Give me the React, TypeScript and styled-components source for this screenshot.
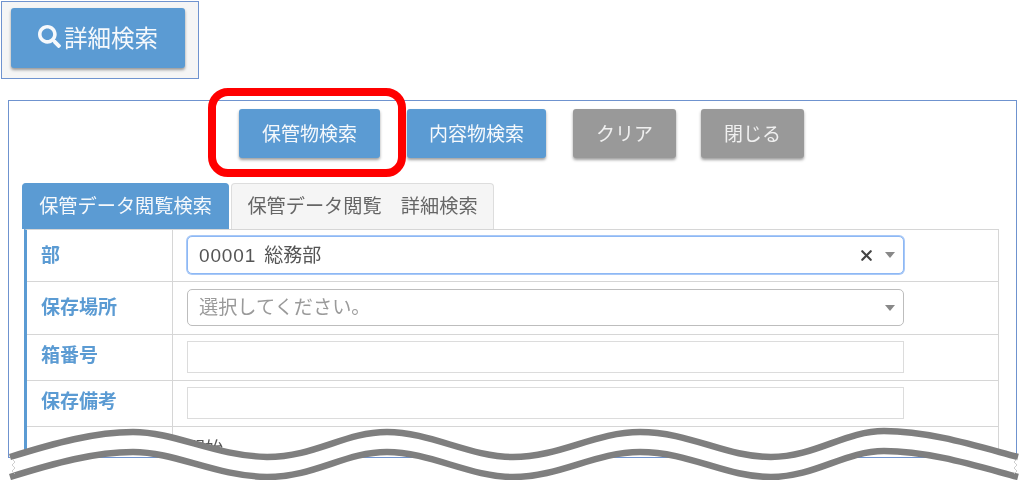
import React from "react";
import styled, { createGlobalStyle } from "styled-components";
import { FaSearch } from "react-icons/fa";
import { X } from "lucide-react";

const Global = createGlobalStyle`
  html, body { margin: 0; padding: 0; background: #fff; }
  body { font-family: "Liberation Sans", "Noto Sans CJK JP", sans-serif; }
  * { box-sizing: border-box; }
`;

const Page = styled.div`
  position: relative;
  width: 1024px;
  height: 480px;
  overflow: hidden;
  padding-top: 1px;
  filter: blur(0.45px);
`;

const SearchFrame = styled.div`
  width: 198px;
  height: 78px;
  margin-left: 1px;
  padding: 6px 0 0 9px;
  border: 1px solid #6f93cf;
  background: #f5f5f5;
`;

const Btn = styled.button<{ $w: number; $h: number; $gray?: boolean; $size: number; $ml?: number }>`
  display: flex;
  align-items: center;
  justify-content: center;
  width: ${(p) => p.$w}px;
  height: ${(p) => p.$h}px;
  margin-left: ${(p) => p.$ml ?? 0}px;
  padding: 0 0 3px;
  border: 0;
  border-radius: 3px;
  background: ${(p) => (p.$gray ? "#999999" : "#5b9bd3")};
  color: ${(p) => (p.$gray ? "#f0f0f0" : "#f6f9fc")};
  font-family: inherit;
  font-size: ${(p) => p.$size}px;
  box-shadow: 0 2px 3px rgba(0, 0, 0, 0.38);
  svg { margin-right: 3px; }
`;

const MainFrame = styled.div`
  width: 1009px;
  height: 358px;
  margin: 21px 0 0 8px;
  padding-top: 8px;
  border: 1px solid #6f93cf;
  background: #fff;
  overflow: hidden;
`;

const Toolbar = styled.div`
  display: flex;
  margin-left: 230px;
`;

const Tabs = styled.div`
  display: flex;
  gap: 2px;
  margin: 25px 0 0 13px;
`;

const Tab = styled.div<{ $active?: boolean; $w: number }>`
  display: flex;
  align-items: center;
  justify-content: center;
  width: ${(p) => p.$w}px;
  height: 46px;
  padding-bottom: 3px;
  border: 1px solid ${(p) => (p.$active ? "#5b9bd3" : "#dddddd")};
  border-bottom: 0;
  border-radius: 4px 4px 0 0;
  background: ${(p) => (p.$active ? "#5b9bd3" : "#f5f5f5")};
  color: ${(p) => (p.$active ? "#f6f9fc" : "#666666")};
  font-size: 19.2px;
  white-space: pre;
`;

const Table = styled.div`
  width: 975px;
  height: 240px;
  margin-left: 15px;
  border-top: 1px solid #d6d6d6;
  border-right: 1px solid #d6d6d6;
  border-left: 3px solid #5b9bd3;
`;

const Row = styled.div<{ $h: number }>`
  display: grid;
  grid-template-columns: 146px 1fr;
  height: ${(p) => p.$h}px;
  border-bottom: 1px solid #d6d6d6;
`;

const Label = styled.div<{ $pb?: number }>`
  display: flex;
  align-items: center;
  padding: 0 0 ${(p) => p.$pb ?? 8}px 14px;
  border-right: 1px solid #d6d6d6;
  color: #5b9bd3;
  font-size: 19px;
  font-weight: 700;
`;

const Cell = styled.div`
  display: flex;
  align-items: center;
  padding: 0 0 1px 14px;
  color: #555;
  font-size: 18px;
`;

const Select = styled.div<{ $focus?: boolean }>`
  display: flex;
  align-items: center;
  width: 717px;
  height: ${(p) => (p.$focus ? 38 : 37)}px;
  padding: 0 8px 3px 11px;
  border: 1px solid ${(p) => (p.$focus ? "#8db8f5" : "#bdbdbd")};
  border-radius: 5px;
  background: #fff;
  box-shadow: ${(p) => (p.$focus ? "0 0 0 1px #a9c9f7" : "none")};
  font-size: 19px;
`;

const Value = styled.span`
  flex: 1;
  color: #555;
`;

const Code = styled.span`
  margin-right: 2px;
  letter-spacing: 0.85px;
`;

const Placeholder = styled.span`
  flex: 1;
  color: #9a9a9a;
  font-size: 19.2px;
`;

const Clear = styled(X)`
  margin: 3px 10px 0 0;
  color: #444;
`;

const Caret = styled.i`
  width: 0;
  height: 0;
  margin-top: 3px;
  border-style: solid;
  border-width: 6px 5px 0;
  border-color: #888 transparent transparent;
`;

const TextInput = styled.div`
  width: 717px;
  height: 32px;
  border: 1.5px solid #dcdcdc;
  background: #fff;
`;

const StartCell = styled(Cell)`
  align-items: flex-start;
  padding-top: 7px;
`;

const StartText = styled.span`
  color: #555;
`;

const Highlight = styled.div`
  position: absolute;
  left: 208px;
  top: 88px;
  width: 198px;
  height: 89px;
  border: 8px solid #ff0000;
  border-radius: 20px;
  pointer-events: none;
`;

const Wave = styled.svg`
  position: absolute;
  left: 0;
  top: 420px;
  width: 1024px;
  height: 60px;
`;

const upper =
  "M10 37 C55 23 95 12 133 12 C175 12 215 36 267 37 C315 37 345 12 387 12 C430 12 470 37 513 37 C560 37 595 12 640 12 C690 12 725 37 771 37 C815 37 845 11 884 11 C930 11 980 27 1018 37";
const lowerBack =
  "C980 47 930 31 884 31 C845 31 815 57 771 57 C725 57 690 32 640 32 C595 32 560 57 513 57 C470 57 430 32 387 32 C345 32 315 57 267 57 C215 56 175 32 133 32 C95 32 55 43 10 57";

export default function App() {
  return (
    <Page>
      <Global />
      <SearchFrame>
        <Btn $w={174} $h={60} $size={23.5}>
          <FaSearch size={23} />
          詳細検索
        </Btn>
      </SearchFrame>
      <MainFrame>
        <Toolbar>
          <Btn $w={141} $h={49} $size={19}>保管物検索</Btn>
          <Btn $w={139} $h={49} $size={19} $ml={27}>内容物検索</Btn>
          <Btn $w={103} $h={49} $size={19} $ml={27} $gray>クリア</Btn>
          <Btn $w={103} $h={49} $size={19} $ml={25} $gray>閉じる</Btn>
        </Toolbar>
        <Tabs>
          <Tab $active $w={207}>保管データ閲覧検索</Tab>
          <Tab $w={263}>{"保管データ閲覧　詳細検索"}</Tab>
        </Tabs>
        <Table>
          <Row $h={52}>
            <Label $pb={5}>部</Label>
            <Cell>
              <Select $focus>
                <Value><Code>00001 </Code>総務部</Value>
                <Clear size={17} strokeWidth={3} />
                <Caret />
              </Select>
            </Cell>
          </Row>
          <Row $h={53}>
            <Label $pb={5}>保存場所</Label>
            <Cell>
              <Select>
                <Placeholder>選択してください。</Placeholder>
                <Caret />
              </Select>
            </Cell>
          </Row>
          <Row $h={46}>
            <Label>箱番号</Label>
            <Cell><TextInput /></Cell>
          </Row>
          <Row $h={46}>
            <Label>保存備考</Label>
            <Cell><TextInput /></Cell>
          </Row>
          <Row $h={60}>
            <Label />
            <StartCell><StartText>開始</StartText></StartCell>
          </Row>
        </Table>
      </MainFrame>
      <Highlight />
      <Wave viewBox="0 0 1024 60" aria-hidden="true">
        <path d={`${upper} L1018 57 ${lowerBack} Z`} fill="#fff" stroke="none" />
        <path d={upper} fill="none" stroke="#7f7f7f" strokeWidth="6.5" />
        <path d={`M1018 57 ${lowerBack}`} fill="none" stroke="#7f7f7f" strokeWidth="6.5" />
        <path d="M12 39 l3 3 -3 3 3 3 -3 3 3 3" fill="none" stroke="#c4c4c4" strokeWidth="0.8" />
        <path d="M1017 39 l-3 3 3 3 -3 3 3 3 -3 3" fill="none" stroke="#c4c4c4" strokeWidth="0.8" />
      </Wave>
    </Page>
  );
}
